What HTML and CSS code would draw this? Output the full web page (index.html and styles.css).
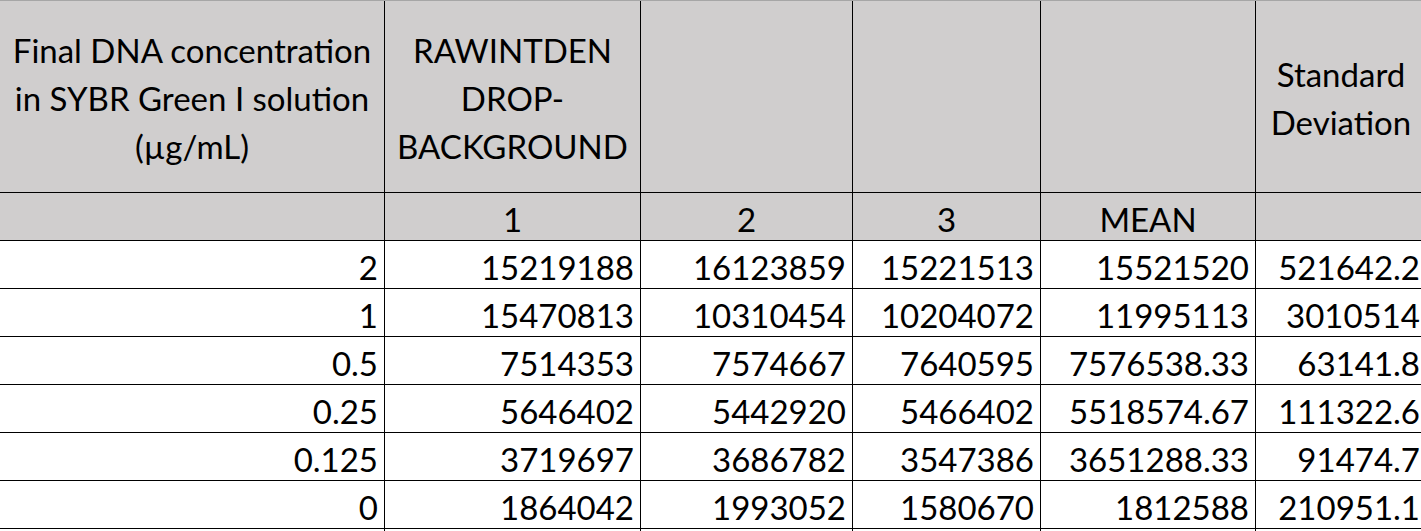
FILE: index.html
```html
<!DOCTYPE html>
<html lang="en">
<head>
<meta charset="utf-8">
<title>SYBR Green I DNA concentration</title>
<link rel="stylesheet" href="styles.css">
</head>
<body>
<div class="sheet">
  <div class="cell head">Final DNA concentration<br>in SYBR Green I solution<br>(µg/mL)</div>
  <div class="cell head">RAWINTDEN<br>DROP-<br>BACKGROUND</div>
  <div class="cell head"></div>
  <div class="cell head"></div>
  <div class="cell head"></div>
  <div class="cell head">Standard<br>Deviation</div>

  <div class="cell sub"></div>
  <div class="cell sub">1</div>
  <div class="cell sub">2</div>
  <div class="cell sub">3</div>
  <div class="cell sub">MEAN</div>
  <div class="cell sub"></div>

  <div class="cell num">2</div>
  <div class="cell num">15219188</div>
  <div class="cell num">16123859</div>
  <div class="cell num">15221513</div>
  <div class="cell num">15521520</div>
  <div class="cell num">521642.2</div>

  <div class="cell num">1</div>
  <div class="cell num">15470813</div>
  <div class="cell num">10310454</div>
  <div class="cell num">10204072</div>
  <div class="cell num">11995113</div>
  <div class="cell num">3010514</div>

  <div class="cell num">0.5</div>
  <div class="cell num">7514353</div>
  <div class="cell num">7574667</div>
  <div class="cell num">7640595</div>
  <div class="cell num">7576538.33</div>
  <div class="cell num">63141.8</div>

  <div class="cell num">0.25</div>
  <div class="cell num">5646402</div>
  <div class="cell num">5442920</div>
  <div class="cell num">5466402</div>
  <div class="cell num">5518574.67</div>
  <div class="cell num">111322.6</div>

  <div class="cell num">0.125</div>
  <div class="cell num">3719697</div>
  <div class="cell num">3686782</div>
  <div class="cell num">3547386</div>
  <div class="cell num">3651288.33</div>
  <div class="cell num">91474.7</div>

  <div class="cell num">0</div>
  <div class="cell num">1864042</div>
  <div class="cell num">1993052</div>
  <div class="cell num">1580670</div>
  <div class="cell num">1812588</div>
  <div class="cell num">210951.1</div>

  <div class="cell blank"></div>
  <div class="cell blank"></div>
  <div class="cell blank"></div>
  <div class="cell blank"></div>
  <div class="cell blank"></div>
  <div class="cell blank"></div>
</div>
</body>
</html>
```

FILE: styles.css
```css
html, body {
  margin: 0;
  padding: 0;
  background: #ffffff;
  overflow: hidden;
}

.sheet {
  display: grid;
  grid-template-columns: 384px 255px 211px 187px 214px 170px;
  grid-template-rows: 191px 47px repeat(6, 47px) 2px;
  gap: 1px;
  background: #000000;
  border-top: 1px solid #a6a6a6;
  width: max-content;
  font-family: "Lato", "Open Sans", sans-serif;
  font-size: 33px;
  color: #000000;
}

.cell {
  background: #ffffff;
  display: flex;
  align-items: center;
  white-space: nowrap;
  overflow: hidden;
}

.head {
  background: #d0cece;
  justify-content: center;
  text-align: center;
  line-height: 48px;
  padding-top: 2px;
}

.sub {
  background: #d0cece;
  justify-content: center;
  padding-top: 4px;
}

.num {
  justify-content: flex-end;
  padding-right: 6px;
  padding-top: 4px;
}
```
